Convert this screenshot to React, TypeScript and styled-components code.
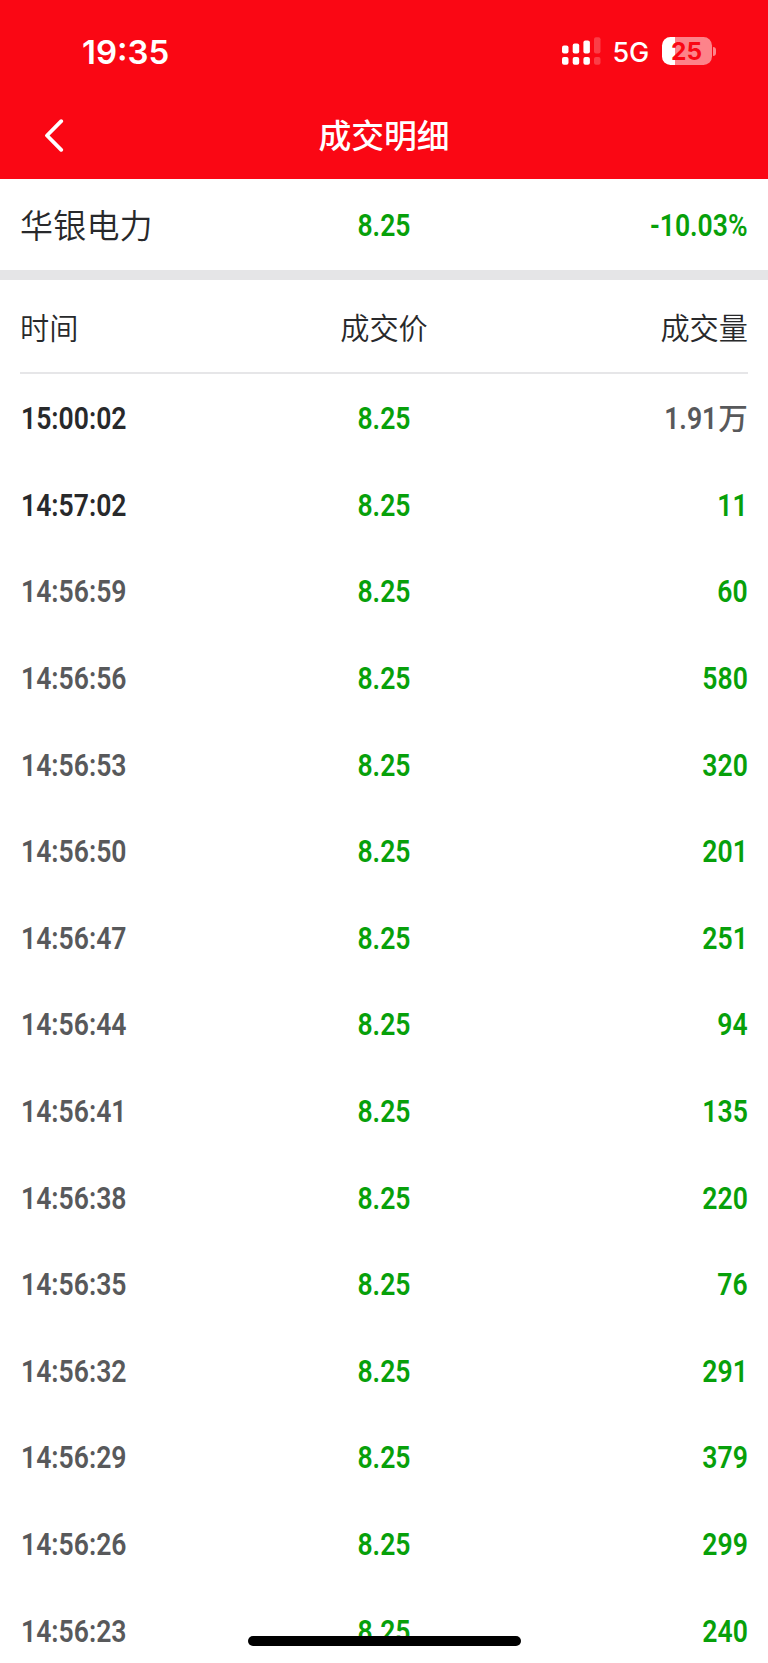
import React from "react";
import styled, { createGlobalStyle } from "styled-components";

const GlobalStyle = createGlobalStyle`
  * { box-sizing: border-box; }
  html, body { margin: 0; padding: 0; background: #fff; }
  body { font-family: "Noto Sans CJK SC", sans-serif; color: #28292b; overflow: hidden; }
`;

const Screen = styled.div`
  position: relative;
  width: 768px;
  height: 1663px;
  overflow: hidden;
  background: #fff;
`;

const Top = styled.header`
  height: 179.4px;
  background: #fa0714;
  color: #fff;
`;

const StatusBar = styled.div`
  height: 92px;
  padding: 10px 52px 0 82px;
  display: flex;
  align-items: center;
  font-family: Inter, sans-serif;
`;

const Clock = styled.span`
  flex: 1;
  padding-top: 1px;
  font-size: 33px;
  font-weight: 600;
`;

const Signal = styled.svg`
  display: block;
  width: 40px;
  height: 28px;
`;

const Network = styled.span`
  width: 60px;
  padding-left: 11px;
  padding-top: 2px;
  font-size: 27px;
  font-weight: 500;
  letter-spacing: -0.3px;
`;

const Battery = styled.div`
  display: flex;
  align-items: center;
  gap: 1.5px;
`;

const BatteryBody = styled.div`
  width: 50px;
  height: 28px;
  border-radius: 8.5px;
  background: linear-gradient(90deg, #fff 13px, #fd838a 13px);
  color: #fa0714;
  font-size: 24.5px;
  font-weight: 700;
  line-height: 29px;
  text-align: center;
`;

const BatteryTip = styled.div`
  width: 3px;
  height: 9px;
  border-radius: 0 4px 4px 0;
  background: #fd838a;
`;

const NavBar = styled.div`
  height: 86px;
  display: grid;
  grid-template-columns: 100px 1fr 100px;
  align-items: center;
`;

const BackButton = styled.button`
  border: 0;
  padding: 0 0 0 43px;
  background: none;
  color: #fff;
  svg { display: block; }
`;

const Title = styled.h1`
  margin: 0;
  padding-bottom: 2px;
  font-size: 32.8px;
  font-weight: 500;
  line-height: 84px;
  text-align: center;
`;

const Columns = styled.div`
  display: grid;
  grid-template-columns: 1fr 1fr 1fr;
  align-items: center;
  & > :nth-child(2) { justify-self: center; transform-origin: center; }
  & > :nth-child(3) { justify-self: end; transform-origin: right; }
`;

const Summary = styled(Columns)`
  height: 90.6px;
  padding: 0 20px;
`;

const StockName = styled.span`
  padding-bottom: 2px;
  font-size: 33px;
  font-weight: 350;
  letter-spacing: 0.2px;
  line-height: 88px;
`;

const Divider = styled.div`
  height: 10px;
  background: #e5e5e7;
`;

const TableHead = styled(Columns)`
  height: 94.5px;
  margin: 0 20px;
  border-bottom: 2px solid #e6e6e8;
  font-size: 29.2px;
  font-weight: 350;
  line-height: 92px;
`;

const Row = styled(Columns)`
  height: 86.6px;
  padding: 1px 20.5px 0 21px;
`;

const tones = { green: "#07a00a", dark: "#28292b", grey: "#58595b" };

const Figure = styled.span<{ $tone: keyof typeof tones }>`
  display: inline-block;
  justify-self: start;
  transform: scaleX(0.83);
  transform-origin: left;
  color: ${(p) => tones[p.$tone]};
  font-family: Roboto, "Noto Sans CJK SC", sans-serif;
  font-size: 32px;
  font-weight: 600;
  line-height: 40px;
  white-space: nowrap;
`;

const Unit = styled.span`
  display: inline-block;
  margin-left: 2px;
  font-size: 30px;
  font-weight: 500;
  line-height: 1;
  transform: scaleX(1.19);
  transform-origin: right;
  padding-left: 5px;
`;

const HomeIndicator = styled.div`
  position: absolute;
  left: 247.5px;
  bottom: 17px;
  width: 273.5px;
  height: 10px;
  border-radius: 5px;
  background: #000;
`;

type Trade = { time: string; volume: string; unit?: string; dark?: boolean };

const trades: Trade[] = [
  { time: "15:00:02", volume: "1.91", unit: "万", dark: true },
  { time: "14:57:02", volume: "11", dark: true },
  { time: "14:56:59", volume: "60" },
  { time: "14:56:56", volume: "580" },
  { time: "14:56:53", volume: "320" },
  { time: "14:56:50", volume: "201" },
  { time: "14:56:47", volume: "251" },
  { time: "14:56:44", volume: "94" },
  { time: "14:56:41", volume: "135" },
  { time: "14:56:38", volume: "220" },
  { time: "14:56:35", volume: "76" },
  { time: "14:56:32", volume: "291" },
  { time: "14:56:29", volume: "379" },
  { time: "14:56:26", volume: "299" },
  { time: "14:56:23", volume: "240" },
];

export default function App() {
  return (
    <>
      <GlobalStyle />
      <Screen>
        <Top>
          <StatusBar>
            <Clock>19:35</Clock>
            <Signal viewBox="0 0 40 28" fill="#fff">
              <rect x="0" y="8.5" width="6.5" height="8" rx="2" />
              <rect x="10.7" y="6.5" width="6.5" height="10" rx="2" />
              <rect x="21.4" y="3.5" width="6.5" height="13" rx="2" />
              <rect x="32" y="0.3" width="6.5" height="16.2" rx="2" opacity="0.22" />
              <rect x="0" y="20" width="6.5" height="7.7" rx="2" />
              <rect x="10.7" y="20" width="6.5" height="7.7" rx="2" />
              <rect x="21.4" y="20" width="6.5" height="7.7" rx="2" />
              <rect x="32" y="20" width="6.5" height="7.7" rx="2" opacity="0.22" />
            </Signal>
            <Network>5G</Network>
            <Battery>
              <BatteryBody>25</BatteryBody>
              <BatteryTip />
            </Battery>
          </StatusBar>
          <NavBar>
            <BackButton aria-label="返回">
              <svg width="22" height="34" viewBox="0 0 22 34" fill="none" stroke="#fff" strokeWidth="3.8" strokeLinecap="round" strokeLinejoin="round">
                <path d="M18.2 3.2 L4 17.5 L18.2 31.8" />
              </svg>
            </BackButton>
            <Title>成交明细</Title>
          </NavBar>
        </Top>
        <Summary>
          <StockName>华银电力</StockName>
          <Figure $tone="green">8.25</Figure>
          <Figure $tone="green">-10.03%</Figure>
        </Summary>
        <Divider />
        <TableHead>
          <span>时间</span>
          <span>成交价</span>
          <span>成交量</span>
        </TableHead>
        {trades.map((t) => (
          <Row key={t.time}>
            <Figure $tone={t.dark ? "dark" : "grey"}>{t.time}</Figure>
            <Figure $tone="green">8.25</Figure>
            <Figure $tone={t.unit ? "grey" : "green"}>
              {t.volume}
              {t.unit && <Unit>{t.unit}</Unit>}
            </Figure>
          </Row>
        ))}
        <HomeIndicator />
      </Screen>
    </>
  );
}
